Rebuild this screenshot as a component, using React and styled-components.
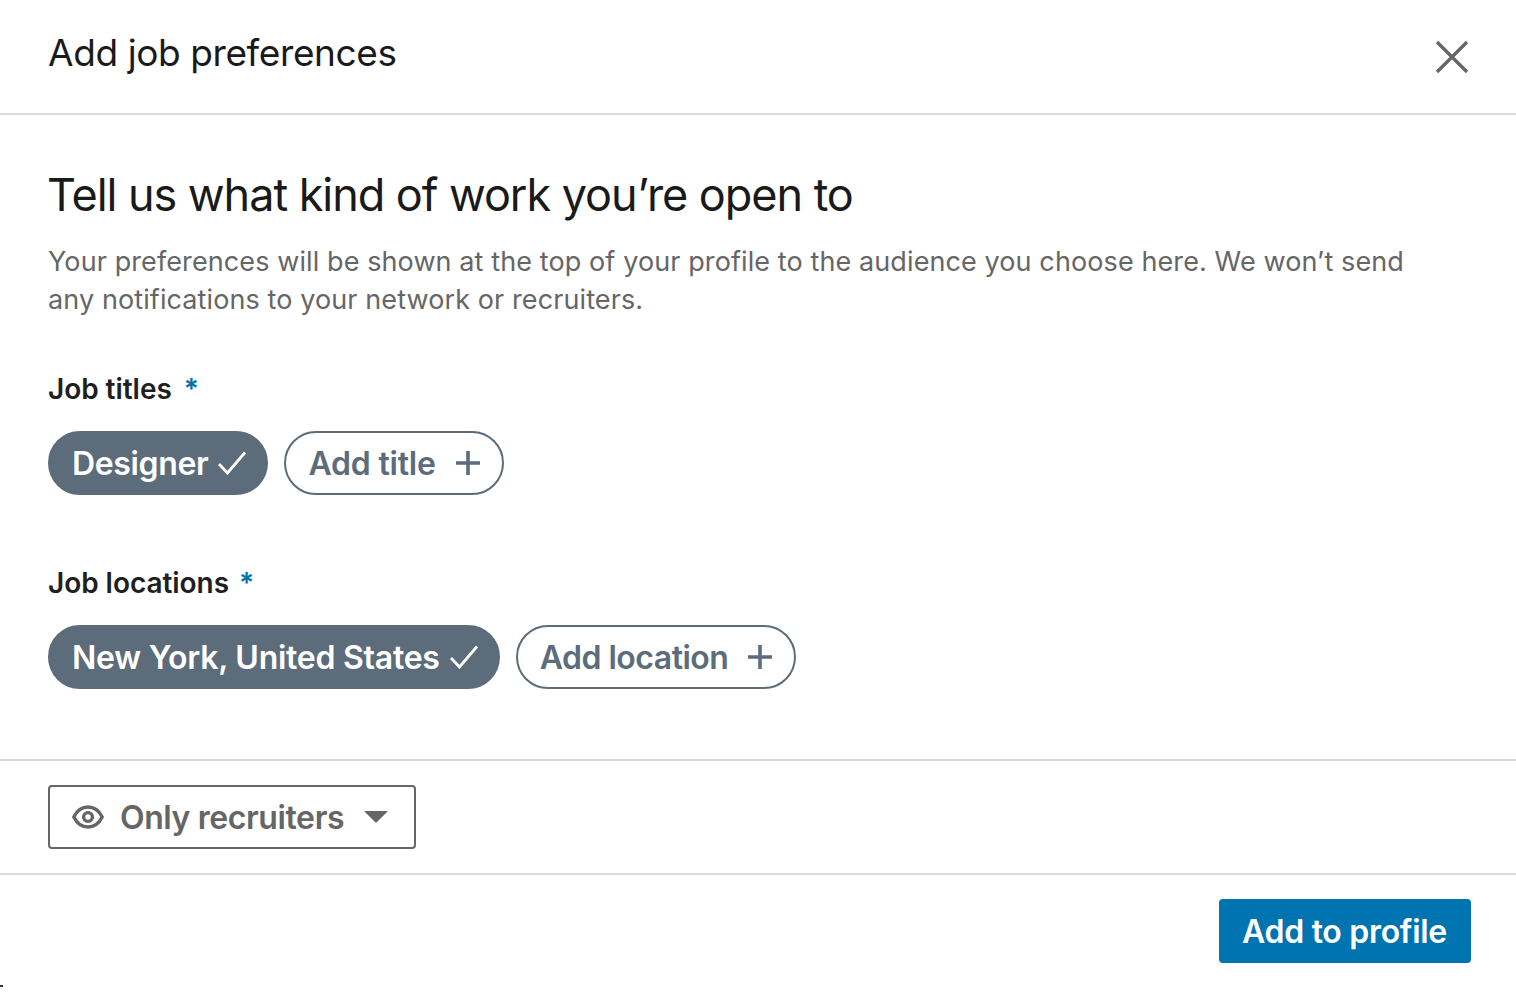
import React from 'react';
import styled, { createGlobalStyle } from 'styled-components';

const Global = createGlobalStyle`
  html, body {
    margin: 0;
    padding: 0;
    background: #fff;
  }
  body {
    font-family: Inter, "Liberation Sans", sans-serif;
    -webkit-font-smoothing: antialiased;
  }
`;

const Modal = styled.div`
  position: relative;
  width: 1516px;
  height: 996px;
  display: flex;
  flex-direction: column;
  background: #fff;
  overflow: hidden;
`;

const Header = styled.header`
  box-sizing: border-box;
  padding: 31px 46px 0 48px;
  display: flex;
  justify-content: space-between;
  align-items: flex-start;
  border-bottom: 2px solid #dcdcdc;
  flex: none;
  height: 115px;
`;

const HeaderTitle = styled.h2`
  margin: 0;
  font-size: 37px;
  line-height: 44px;
  font-weight: 400;
  color: #1a1a1a;
  letter-spacing: -0.4px;
`;

const CloseButton = styled.button`
  border: 0;
  background: none;
  padding: 0;
  margin-top: 8px;
  width: 36px;
  height: 36px;
  color: #666;
  display: block;
`;

const Body = styled.main`
  height: 646px;
  flex: none;
  box-sizing: border-box;
  padding: 53px 48px 0;
  border-bottom: 2px solid #dcdcdc;
`;

const Heading = styled.h1`
  margin: 0 0 0 -1px;
  font-size: 45px;
  line-height: 54px;
  font-weight: 400;
  color: #1a1a1a;
  letter-spacing: -1.05px;
`;

const Intro = styled.p`
  margin: 21px 0 0;
  font-size: 27px;
  line-height: 38px;
  letter-spacing: 0.1px;
  color: #666;
`;

const Field = styled.section`
  margin-top: ${p => p.$top}px;
`;

const Label = styled.div`
  font-size: 28px;
  line-height: 36px;
  font-weight: 600;
  letter-spacing: -0.05px;
  color: #1f1f1f;
`;

const Required = styled.span`
  color: #0073b1;
  margin-left: ${p => p.$gap}px;
`;

const Pills = styled.div`
  display: flex;
  gap: 16px;
  margin-top: 24px;
`;

const Pill = styled.button`
  height: 64px;
  box-sizing: border-box;
  border-radius: 32px;
  border: 2px solid #5c6c7a;
  background: ${p => (p.$selected ? '#5c6c7a' : '#fff')};
  color: ${p => (p.$selected ? '#fff' : '#5c6c7a')};
  padding: 0 ${p => (p.$selected ? 20 : 21)}px 0 22px;
  display: flex;
  align-items: center;
  gap: ${p => (p.$selected ? 10 : 19)}px;
  font: 600 32px/40px Inter, "Liberation Sans", sans-serif;
  letter-spacing: ${p => p.$track}px;
  white-space: nowrap;
`;

const PillText = styled.span`
  padding-top: 2px;
`;

const VisibilityBar = styled.div`
  height: 114px;
  flex: none;
  box-sizing: border-box;
  padding: 24px 48px 0;
  border-bottom: 2px solid #dcdcdc;
`;

const Select = styled.button`
  width: 368px;
  height: 64px;
  box-sizing: border-box;
  border: 2px solid #666;
  border-radius: 4px;
  background: #fff;
  color: #666;
  padding: 0 26px 0 22px;
  display: flex;
  align-items: center;
  gap: 16px;
  font: 600 32px/40px Inter, "Liberation Sans", sans-serif;
  letter-spacing: -0.4px;
  white-space: nowrap;
`;

const SelectText = styled.span`
  padding-top: 2px;
  margin-right: auto;
`;

const Footer = styled.footer`
  display: flex;
  justify-content: flex-end;
  padding: 24px 45px 0 0;
`;

const SubmitButton = styled.button`
  height: 64px;
  width: 252px;
  border: 0;
  border-radius: 4px;
  background: #0073b1;
  color: #fff;
  font: 600 32px/40px Inter, "Liberation Sans", sans-serif;
  letter-spacing: -0.3px;
  padding: 2px 1px 0 0;
`;

const CornerMark = styled.span`
  position: absolute;
  left: 0;
  top: 985px;
  width: 3px;
  height: 2px;
  background: #333;
`;

const CloseIcon = () => (
  <svg width="36" height="36" viewBox="0 0 36 36" fill="none" stroke="currentColor" strokeWidth="3.4">
    <path d="M3 3l30 30M33 3L3 33" />
  </svg>
);

const CheckIcon = () => (
  <svg width="28" height="24" viewBox="0 0 28 24" fill="none" stroke="currentColor" strokeWidth="2.8">
    <path d="M1 13l8.5 9L27 1.5" />
  </svg>
);

const PlusIcon = () => (
  <svg width="26" height="26" viewBox="0 0 26 26" fill="none" stroke="currentColor" strokeWidth="3.6">
    <path d="M13 1v24M1 13h24" />
  </svg>
);

const EyeIcon = () => (
  <svg width="32" height="26" viewBox="0 0 32 26" fill="none" stroke="currentColor" strokeWidth="3.4">
    <path d="M1.8 13C5 6.5 10 3 16 3S27 6.5 30.2 13C27 19.5 22 23 16 23S5 19.5 1.8 13z" />
    <circle cx="16" cy="13" r="4.4" />
  </svg>
);

const CaretIcon = () => (
  <svg width="24" height="12" viewBox="0 0 24 12" fill="currentColor">
    <path d="M0 0h24L12 12z" />
  </svg>
);

export default function App() {
  return (
    <Modal>
      <Global />
      <Header>
        <HeaderTitle>Add job preferences</HeaderTitle>
        <CloseButton aria-label="Close"><CloseIcon /></CloseButton>
      </Header>
      <Body>
        <Heading>Tell us what kind of work you’re open to</Heading>
        <Intro>
          Your preferences will be shown at the top of your profile to the audience you choose here. We won’t send
          <br />
          any notifications to your network or recruiters.
        </Intro>
        <Field $top={52}>
          <Label>Job titles<Required $gap={12}>*</Required></Label>
          <Pills>
            <Pill $selected $track={-0.35}><PillText>Designer</PillText><CheckIcon /></Pill>
            <Pill $track={-0.2}><PillText>Add title</PillText><PlusIcon /></Pill>
          </Pills>
        </Field>
        <Field $top={70}>
          <Label>Job locations<Required $gap={10}>*</Required></Label>
          <Pills>
            <Pill $selected $track={-0.25}><PillText>New York, United States</PillText><CheckIcon /></Pill>
            <Pill $track={-0.5}><PillText>Add location</PillText><PlusIcon /></Pill>
          </Pills>
        </Field>
      </Body>
      <VisibilityBar>
        <Select><EyeIcon /><SelectText>Only recruiters</SelectText><CaretIcon /></Select>
      </VisibilityBar>
      <Footer>
        <SubmitButton>Add to profile</SubmitButton>
      </Footer>
      <CornerMark />
    </Modal>
  );
}
